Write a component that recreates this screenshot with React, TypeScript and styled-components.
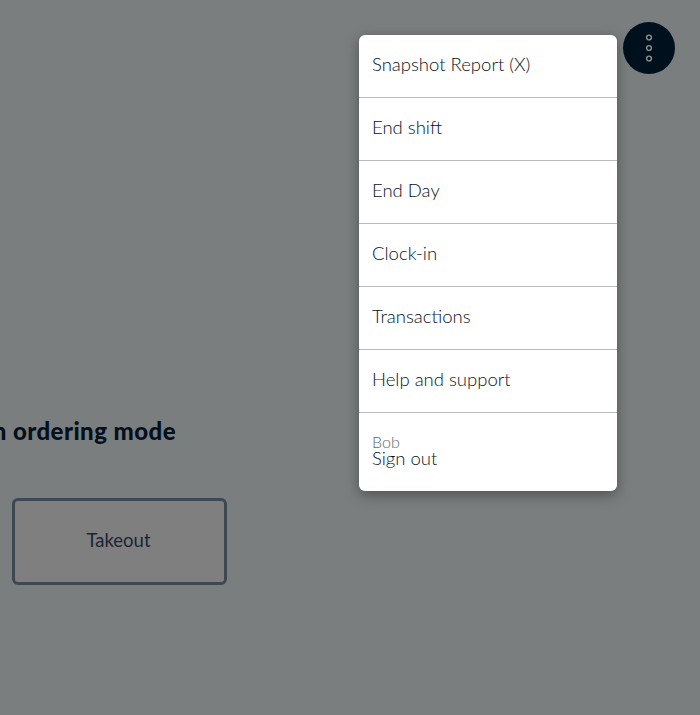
import React from "react";
import styled, { createGlobalStyle } from "styled-components";

const Global = createGlobalStyle`
  html, body { margin: 0; padding: 0; height: 100%; background: #7a7e7f; }
  body { font-family: Lato, "Open Sans", sans-serif; overflow: hidden; }
  #root { height: 715px; }
`;

const Page = styled.div`
  position: relative;
  width: 700px;
  height: 715px;
  overflow: hidden;
  background: #7a7e7f;
`;

const Content = styled.main`
  display: flex;
  flex-direction: column;
  padding: 417px 0 0 12px;
`;

const HeadingClip = styled.div`
  display: flex;
  justify-content: flex-end;
  width: 176px;
  margin-left: -12px;
  overflow: hidden;
`;

const Heading = styled.h1`
  margin: 0;
  flex: none;
  font-size: 24px;
  line-height: 28px;
  font-weight: 900;
  letter-spacing: 0.45px;
  color: #04101d;
  white-space: nowrap;
`;

const ModeButton = styled.button`
  box-sizing: border-box;
  width: 215px;
  height: 87px;
  margin-top: 53px;
  border: 3px solid #3d4853;
  border-radius: 6px;
  background: #807f80;
  color: #182635;
  font: 400 18.5px/24px Lato, sans-serif;
  padding: 0 2px 3px 0;
`;

const MoreButton = styled.button`
  position: absolute;
  top: 22px;
  left: 623px;
  width: 52px;
  height: 52px;
  padding: 0;
  border: 0;
  border-radius: 50%;
  background: #01101d;
  display: flex;
  align-items: center;
  justify-content: center;
`;

const Menu = styled.nav`
  position: absolute;
  top: 35px;
  left: 359px;
  width: 258px;
  background: #fff;
  border-radius: 6px;
  overflow: hidden;
  box-shadow: 0 4px 14px rgba(0, 0, 0, 0.35);
`;

const MenuItem = styled.div`
  box-sizing: border-box;
  height: 63px;
  padding: 0 13px 4px;
  display: flex;
  align-items: center;
  border-bottom: 1px solid #b9bbbd;
  font-size: 18.5px;
  font-weight: 300;
  color: #06121e;
`;

const UserItem = styled.div`
  box-sizing: border-box;
  height: 78px;
  padding: 20px 13px 0;
  display: flex;
  flex-direction: column;
`;

const UserName = styled.span`
  font-size: 16px;
  font-weight: 300;
  line-height: 18px;
  color: #5f6872;
`;

const SignOut = styled.span`
  font-size: 18.5px;
  font-weight: 300;
  line-height: 14px;
  color: #06121e;
`;

const items = ["Snapshot Report (X)", "End shift", "End Day", "Clock-in", "Transactions", "Help and support"];

export default function App() {
  return (
    <Page>
      <Global />
      <Content>
        <HeadingClip>
          <Heading>Select an ordering mode</Heading>
        </HeadingClip>
        <ModeButton>Takeout</ModeButton>
      </Content>
      <MoreButton aria-label="More">
        <svg width="8" height="30" viewBox="0 0 8 30" fill="none" stroke="#8d9296" strokeWidth="1.4">
          <circle cx="4" cy="4.5" r="2.4" />
          <circle cx="4" cy="15" r="2.4" />
          <circle cx="4" cy="25.5" r="2.4" />
        </svg>
      </MoreButton>
      <Menu>
        {items.map((t) => (
          <MenuItem key={t}>{t}</MenuItem>
        ))}
        <UserItem>
          <UserName>Bob</UserName>
          <SignOut>Sign out</SignOut>
        </UserItem>
      </Menu>
    </Page>
  );
}
